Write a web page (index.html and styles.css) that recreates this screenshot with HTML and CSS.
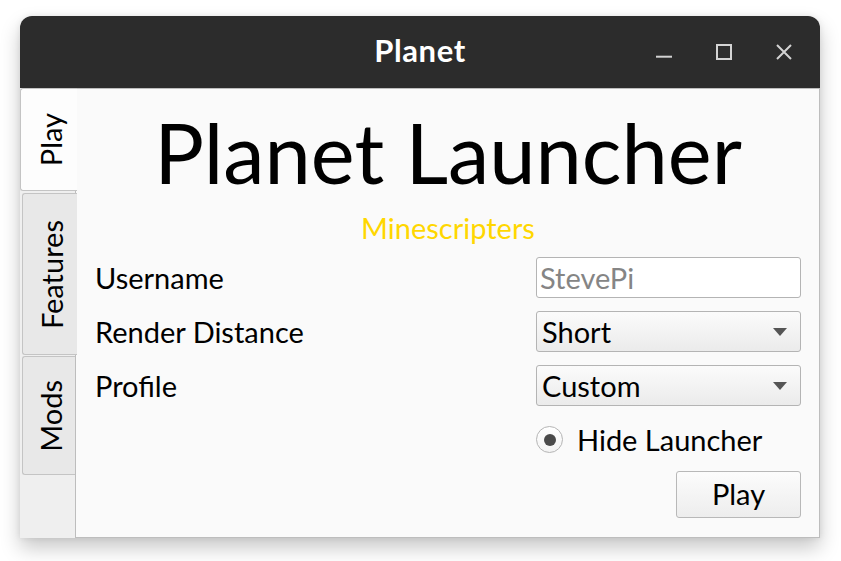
FILE: index.html
```html
<!DOCTYPE html>
<html lang="en">
<head>
<meta charset="utf-8">
<title>Planet</title>
<link rel="stylesheet" href="styles.css">
</head>
<body>
<div class="window">
  <header class="titlebar">
    <div class="spacer"></div>
    <h1 class="title">Planet</h1>
    <div class="controls">
      <span class="ctl"><svg width="16" height="16" viewBox="0 0 16 16"><path d="M0 12.7H16" stroke="#d3d3d3" stroke-width="2"/></svg></span>
      <span class="ctl"><svg width="16" height="16" viewBox="0 0 16 16"><rect x="1" y="1" width="14" height="14" fill="none" stroke="#d3d3d3" stroke-width="2"/></svg></span>
      <span class="ctl"><svg width="16" height="16" viewBox="0 0 16 16"><path d="M1 1L15 15M15 1L1 15" stroke="#d3d3d3" stroke-width="2"/></svg></span>
    </div>
  </header>
  <div class="body">
    <nav class="tabs">
      <div class="tab active"><span class="tab-label">Play</span></div>
      <div class="tab long"><span class="tab-label">Features</span></div>
      <div class="tab short"><span class="tab-label">Mods</span></div>
    </nav>
    <main class="pane">
      <h2 class="heading">Planet Launcher</h2>
      <p class="sub">Minescripters</p>
      <div class="form">
        <label class="label">Username</label>
        <input class="field" type="text" placeholder="StevePi">
        <label class="label">Render Distance</label>
        <div class="combo"><span>Short</span><i class="arrow"></i></div>
        <label class="label">Profile</label>
        <div class="combo"><span>Custom</span><i class="arrow"></i></div>
        <div class="empty"></div>
        <div class="radio-row"><span class="radio"></span><span>Hide Launcher</span></div>
      </div>
      <div class="actions"><button class="play">Play</button></div>
    </main>
  </div>
</div>
</body>
</html>
```
FILE: styles.css
```css
* { box-sizing: border-box; }
html, body { min-height: 100%; }
body {
  margin: 0;
  padding-bottom: 30px;
  background: #ffffff;
  font-family: Lato, "Noto Sans", sans-serif;
  color: #000;
}
.window {
  margin: 16px 0 0 20px;
  width: 800px;
  border-radius: 12px 12px 0 0;
  box-shadow: 0 10px 20px rgba(0, 0, 0, 0.22), 0 0 6px rgba(0, 0, 0, 0.08);
}
.titlebar {
  height: 72px;
  background: #2c2c2c;
  border-radius: 12px 12px 0 0;
  display: grid;
  grid-template-columns: 1fr auto 1fr;
  align-items: center;
}
.title {
  margin: 0;
  font-size: 31px;
  font-weight: 700;
  letter-spacing: 0.6px;
  line-height: 36px;
  color: #ffffff;
  padding-bottom: 4px;
}
.controls {
  justify-self: end;
  display: flex;
  padding-right: 6px;
}
.ctl {
  width: 60px;
  height: 16px;
  display: flex;
  justify-content: center;
}
.ctl svg { display: block; }
.body {
  display: flex;
  height: 450px;
}
.tabs {
  width: 55px;
  background: #efefef;
  display: flex;
  flex-direction: column;
  gap: 1px;
  position: relative;
  z-index: 1;
}
.tab {
  width: 55px;
  margin-left: 2px;
  padding: 24px 0 24px 4px;
  background: #e8e8e8;
  border: 1px solid #c4c4c4;
  border-right: none;
  border-radius: 3px 0 0 3px;
  display: flex;
  justify-content: center;
}
.tab.long { padding-top: 26px; padding-bottom: 25px; }
.tab.short { width: 53px; padding-top: 23px; padding-bottom: 22px; }
.tab.active {
  width: 57px;
  margin-left: 0;
  background: #fdfdfd;
  margin-bottom: 1px;
}
.tab-label {
  writing-mode: vertical-rl;
  transform: rotate(180deg);
  font-size: 29px;
  line-height: 30px;
}
.pane {
  flex: 1;
  background: #fafafa;
  border: 1px solid #bdbdbd;
  padding: 23px 18px 0 19px;
  display: flex;
  flex-direction: column;
}
.heading {
  margin: 0;
  font-size: 83px;
  font-weight: 400;
  line-height: 80px;
  text-align: center;
}
.sub {
  margin: 18px 0 0;
  font-size: 29px;
  line-height: 36px;
  text-align: center;
  color: #ffd700;
}
.form {
  margin-top: 11px;
  display: grid;
  grid-template-columns: 1fr 265px;
  grid-auto-rows: 41px;
  row-gap: 13px;
  align-items: center;
}
.label {
  font-size: 29px;
  line-height: 36px;
}
.field {
  height: 41px;
  width: 100%;
  margin: 0;
  padding: 0 3px;
  font-family: inherit;
  font-size: 29px;
  background: #ffffff;
  border: 1px solid #b4b4b4;
  border-radius: 3px;
  outline: none;
}
.field::placeholder { color: #858585; }
.combo {
  height: 41px;
  display: flex;
  align-items: center;
  justify-content: space-between;
  padding: 0 13px 0 5px;
  font-size: 29px;
  background: linear-gradient(#fbfbfb, #ebebeb);
  border: 1px solid #b4b4b4;
  border-radius: 3px;
}
.arrow {
  width: 0;
  height: 0;
  border-left: 7.5px solid transparent;
  border-right: 7.5px solid transparent;
  border-top: 8px solid #555555;
}
.radio-row {
  display: flex;
  align-items: center;
  gap: 14px;
  font-size: 29px;
}
.radio {
  width: 27px;
  height: 27px;
  border: 1px solid #b5b5b5;
  border-radius: 50%;
  background: linear-gradient(#ffffff, #f3f3f3);
  display: flex;
  align-items: center;
  justify-content: center;
}
.radio::after {
  content: "";
  width: 12px;
  height: 12px;
  border-radius: 50%;
  background: #4a4a4a;
}
.actions {
  margin-top: 11px;
  display: flex;
  justify-content: flex-end;
}
.play {
  width: 125px;
  height: 47px;
  font-family: inherit;
  font-size: 29px;
  color: #000;
  background: linear-gradient(#fcfcfc, #ededed);
  border: 1px solid #b8b8b8;
  border-radius: 3px;
  padding: 0 0 2px;
}
```
